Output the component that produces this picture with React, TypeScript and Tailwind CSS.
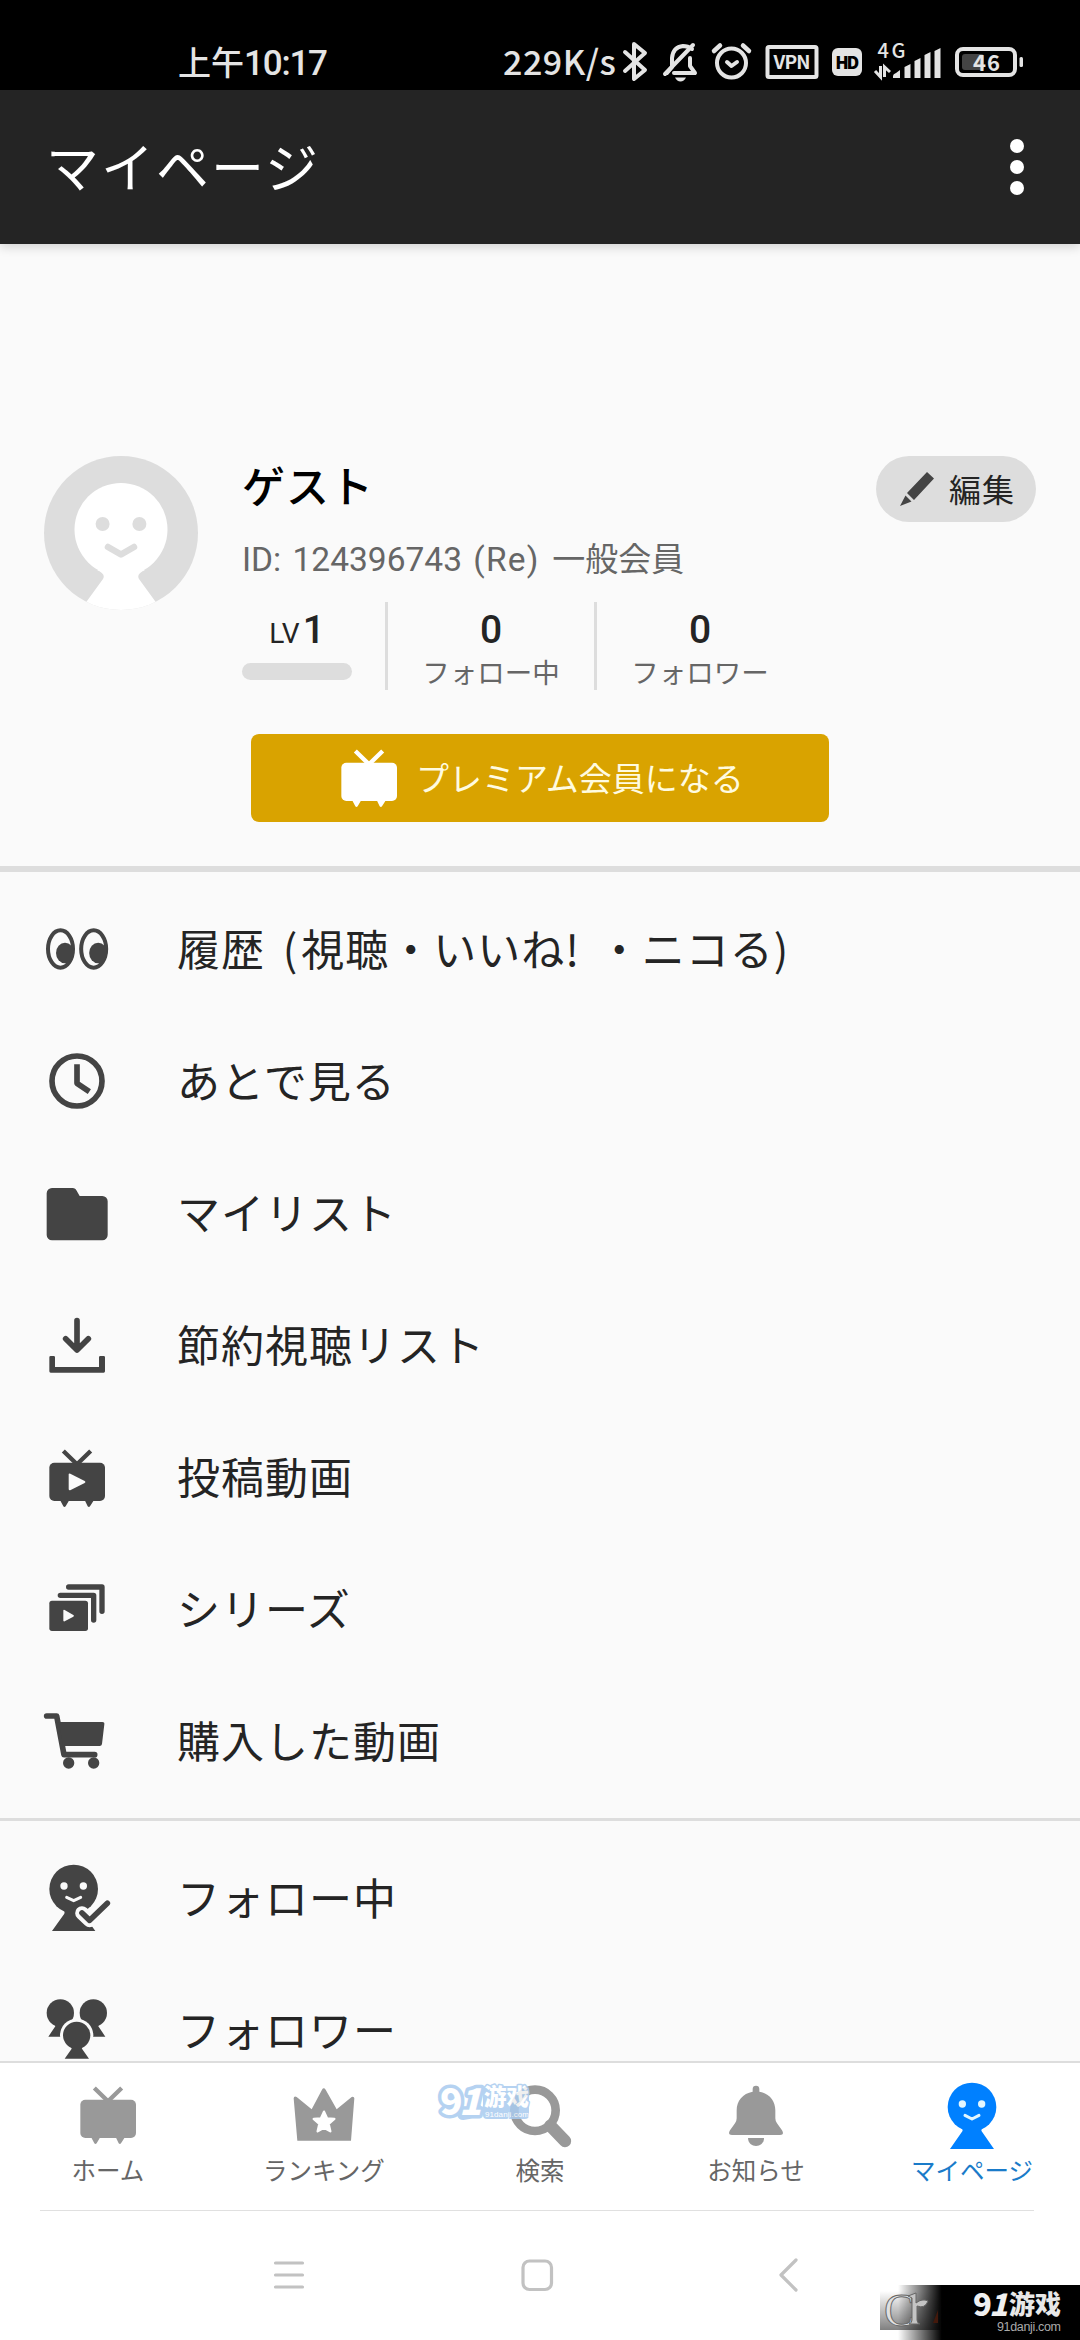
import type { ReactNode } from "react";

const INK = "#444444";
const PAPER = "#fafafa";

function Icon({ children, className = "" }: { children: ReactNode; className?: string }) {
  return (
    <svg viewBox="0 0 198 198" className={`h-[66px] w-[66px] shrink-0 overflow-visible ${className}`}>
      {children}
    </svg>
  );
}

const line = (color: string, width: number) => ({
  fill: "none",
  stroke: color,
  strokeWidth: width,
  strokeLinecap: "round" as const,
  strokeLinejoin: "round" as const,
});

function Eyes() {
  return (
    <Icon>
      {[49.5, 149].map((x) => (
        <g key={x}>
          <ellipse cx={x} cy="99" rx="37.5" ry="56" fill="none" stroke={INK} strokeWidth="12" />
          <ellipse cx={x + 13.5} cy="111" rx="27" ry="31" fill={INK} />
        </g>
      ))}
    </Icon>
  );
}

function Clock() {
  return (
    <Icon>
      <circle cx="99" cy="99" r="75" fill="none" stroke={INK} strokeWidth="17" />
      <path d="M99 49v57l37 25" fill="none" stroke={INK} strokeWidth="17" strokeLinejoin="round" />
    </Icon>
  );
}

function Folder() {
  return (
    <Icon>
      <path
        fill={INK}
        d="M24 24h62c6 0 9 3 12 8l9 16h68a16 16 0 0 1 16 16v101a16 16 0 0 1-16 16H24a16 16 0 0 1-16-16V40a16 16 0 0 1 16-16z"
      />
    </Icon>
  );
}

function Download() {
  return (
    <Icon>
      <path d="M99 26v86M65 80l34 34 34-34" {...line(INK, 17)} />
      <path d="M16 136q0-4 4-4h9q4 0 4 4v29h132v-29q0-4 4-4h10q4 0 4 4v42q0 4-4 4H20q-4 0-4-4z" fill={INK} />
    </Icon>
  );
}

function Tv({ color, play = false, className = "" }: { color: string; play?: boolean; className?: string }) {
  return (
    <Icon className={className}>
      <path d="M58 21l41 40 41-40" fill="none" stroke={color} strokeWidth="13" />
      <path d="M48 168h28l-11 19q-4 4-7 0zM122 168h28l-12 19q-3 4-7 0z" fill={color} />
      <rect x="16" y="56" width="167" height="115" rx="15" fill={color} />
      {play && <path d="M74 90q1-3 5-1l43 22q5 3 0 6l-42 21q-5 2-6-2z" fill={PAPER} />}
    </Icon>
  );
}

function Series() {
  return (
    <Icon>
      <path d="M49 58h100v74M74 33h100v73" {...line(INK, 16)} />
      <rect x="16" y="74" width="116" height="91" rx="8" fill={INK} />
      <path d="M58 103q1-3 4-1l26 15q4 2 0 5l-26 14q-3 1-4-2z" fill={PAPER} />
    </Icon>
  );
}

function Cart() {
  return (
    <Icon>
      <path d="M8 24h30l22 116h92" {...line(INK, 17)} />
      <path d="M44 42h131q7 0 6 7l-7 59q-1 6-7 6H58z" fill={INK} />
      <circle cx="74" cy="165" r="17" fill={INK} />
      <circle cx="149" cy="165" r="17" fill={INK} />
    </Icon>
  );
}

function Following() {
  return (
    <Icon>
      <circle cx="89" cy="72" r="73" fill={INK} />
      <path d="M50 130q15 6 11 16L24 198h130l-37-52q-4-10 11-16z" fill={INK} />
      <circle cx="60" cy="63" r="11" fill={PAPER} />
      <circle cx="118" cy="63" r="11" fill={PAPER} />
      <path d="M68 97l21 10 21-10" {...line(PAPER, 9)} />
      <path d="M114 144l23 22 53-51" {...line(PAPER, 41)} />
      <path d="M114 144l23 22 53-51" {...line(INK, 17)} />
    </Icon>
  );
}

function Followers() {
  return (
    <Icon>
      <circle cx="49" cy="48" r="41" fill={INK} />
      <circle cx="148" cy="48" r="41" fill={INK} />
      <path d="M27 80q10 4 6 9l-20 30h48V80zM169 80q-9 4-5 9l20 30h-48V80z" fill={INK} />
      <circle cx="98" cy="115" r="50" fill={PAPER} />
      <circle cx="98" cy="115" r="41" fill={INK} />
      <path d="M75 145q11 6 7 12l-20 28h73l-20-28q-5-6 7-12z" fill={INK} />
    </Icon>
  );
}

function Crown() {
  return (
    <Icon>
      <path
        fill="#999"
        d="M93 26q5-8 11 0l33 59 45-37q7-3 8 4l-10 127H19L8 52q1-8 9-4l45 37z"
      />
      <path
        d="M99 92l9 20 22 2-17 15 5 22-19-11-19 11 5-22-17-15 22-2z"
        fill="#fff"
        stroke="#fff"
        strokeWidth="7"
        strokeLinejoin="round"
      />
    </Icon>
  );
}

function Search() {
  return (
    <Icon>
      <circle cx="84" cy="88" r="62" fill="none" stroke="#999" strokeWidth="26" />
      <path d="M130 134l44 46" {...line("#999", 37)} />
    </Icon>
  );
}

function Bell() {
  return (
    <Icon>
      <path
        fill="#999"
        d="M89 32v-8q0-10 10-10t10 10v8c30 5 48 28 48 56v24q0 8 5 15l15 21q8 14-6 14H27q-14 0-6-14l15-21q5-7 5-15V88c0-28 18-51 48-56z"
      />
      <path d="M75 171h48c0 32-48 32-48 0z" fill="#999" />
    </Icon>
  );
}

function Person() {
  return (
    <Icon>
      <circle cx="99" cy="78" r="73" fill="#0080ff" />
      <path d="M58 136q17 7 12 15l-37 53h132l-37-53q-5-8 12-15z" fill="#0080ff" />
      <circle cx="70" cy="69" r="11" fill="#e2f6ff" />
      <circle cx="128" cy="69" r="11" fill="#e2f6ff" />
      <path d="M78 103l21 11 21-11" {...line("#e2f6ff", 9)} />
    </Icon>
  );
}

function Avatar() {
  return (
    <svg viewBox="44 456 154 154" className="h-[154px] w-[154px] shrink-0">
      <clipPath id="avatar">
        <circle cx="121" cy="533" r="77" />
      </clipPath>
      <g clipPath="url(#avatar)">
        <rect x="44" y="456" width="154" height="154" fill="#ddd" />
        <circle cx="121" cy="529.5" r="46.5" fill="#fff" />
        <path d="M97 570q9 4 6 9l-24 33h84l-24-33q-3-5 6-9z" fill="#fff" />
        <circle cx="102.6" cy="524" r="7" fill="#ddd" />
        <circle cx="139.4" cy="524" r="7" fill="#ddd" />
        <path d="M108 547l13 7.500 13-7.500" {...line("#ddd", 6.5)} />
      </g>
    </svg>
  );
}

function StatusIcons() {
  const c = "#e4e4e4";
  return (
    <svg viewBox="620 38 406 46" className="h-[46px] w-[406px] shrink-0 overflow-visible">
      <path d="M625 52l20 18-11 9V44l11 9-20 18" {...line(c, 4)} />
      <path d="M667 73l5-6V58q1-11 11-12 5 0 9 3M690 58v8l5 7H674" {...line(c, 4)} />
      <path d="M665 74l28-29" {...line(c, 4)} />
      <path d="M675 77.500h11q-2 4-5.500 4t-5.500-4z" fill={c} />
      <circle cx="731.500" cy="63" r="14.500" fill="none" stroke={c} strokeWidth="4" />
      <path d="M727 62l4.500 4 5.500-4" {...line(c, 4)} />
      <path d="M714 51l6-5.500M749 51l-6-5.500" {...line(c, 4.5)} />
      <rect x="767.500" y="47" width="49" height="30" rx="1.500" fill="none" stroke={c} strokeWidth="4" />
      <text x="792" y="69" textAnchor="middle" fontSize="19" fontWeight="700" fill={c} textLength="37">
        VPN
      </text>
      <rect x="832" y="48" width="30" height="28" rx="6" fill={c} />
      <text x="847.200" y="68.500" textAnchor="middle" fontSize="17.500" fontWeight="900" fill="#000" textLength="24">
        HD
      </text>
      <text x="877.500" y="58" fontSize="20" fontWeight="500" fill={c} textLength="28">
        4G
      </text>
      <path d="M880.500 66v11l-5.500-6M884.500 77V67l5.500 5" fill="none" stroke={c} strokeWidth="3" />
      <path
        fill={c}
        d="M893 76q0-2 3-3l4-3v8h-7zM904.500 67l6-3v14h-6zM914.500 61l6-3v20h-6zM924.500 55l6-3v26h-6zM934.500 51l6-3v30h-6z"
      />
      <rect x="957" y="49" width="58" height="26" rx="6" fill="none" stroke={c} strokeWidth="4" />
      <rect x="962" y="54" width="22" height="16" rx="3" fill="#444" />
      <rect x="1019.500" y="57" width="3.500" height="10" rx="1.500" fill={c} />
      <text x="986.500" y="71" textAnchor="middle" fontSize="22" fontWeight="700" fill={c} textLength="27">
        46
      </text>
    </svg>
  );
}

const mainItems = [
  {
    id: "history",
    label: (
      <>
        履歴 <span className="tracking-[4px]">(</span>視聴・いいね! ・ニコる)
      </>
    ),
    icon: <Eyes />,
  },
  { id: "later", label: "あとで見る", icon: <Clock /> },
  { id: "mylist", label: "マイリスト", icon: <Folder /> },
  { id: "saved", label: "節約視聴リスト", icon: <Download /> },
  { id: "posted", label: "投稿動画", icon: <Tv color={INK} play /> },
  { id: "series", label: "シリーズ", icon: <Series /> },
  { id: "bought", label: "購入した動画", icon: <Cart /> },
];

const socialItems = [
  { id: "following", label: "フォロー中", icon: <Following /> },
  { id: "followers", label: "フォロワー", icon: <Followers /> },
];

function MenuRow({ label, icon }: { label: ReactNode; icon: ReactNode }) {
  return (
    <li className="flex h-[132px] shrink-0 items-center pl-11">
      {icon}
      <span className="mb-[5px] ml-[67px] text-[43px] leading-[60px] tracking-[1px] whitespace-pre text-[#242424] [word-spacing:7px]">
        {label}
      </span>
    </li>
  );
}

const tabs = [
  { label: "ホーム", icon: <Tv color="#999999" /> },
  { label: "ランキング", icon: <Crown /> },
  { label: "検索", icon: <Search /> },
  { label: "お知らせ", icon: <Bell /> },
  { label: "マイページ", icon: <Person />, active: true },
];

function Stat({ value, label }: { value: string; label: string }) {
  return (
    <div className="flex w-[209px] flex-col items-center border-l-[3px] border-[#ddd]">
      <span className="mt-[8px] font-[Roboto] text-[39px] leading-[40px] font-medium">{value}</span>
      <span className="mt-[4px] text-[27.5px] leading-[34px] text-[#666]">{label}</span>
    </div>
  );
}

export default function App() {
  return (
    <div className="relative flex h-[2340px] w-[1080px] flex-col overflow-hidden bg-white font-['Noto_Sans_CJK_JP',sans-serif] text-[#242424]">
      <div className="flex h-[90px] shrink-0 items-start bg-black text-[34px] leading-[46px] font-medium text-[#e4e4e4]">
        <span className="mt-[38px] ml-[178px] w-[325px] text-[33px] whitespace-nowrap">
          上午<span className="font-[Roboto] text-[35px] tracking-[-1.2px]">10:17</span>
        </span>
        <span className="mt-[38px] w-[117px] tracking-[0.5px] whitespace-nowrap">229K/s</span>
        <div className="mt-[38px]">
          <StatusIcons />
        </div>
      </div>

      <header className="relative z-10 flex h-[154px] shrink-0 items-center justify-between bg-[#242424] pr-[56px] pl-[46px] text-white shadow-[0_3px_10px_rgba(0,0,0,0.16)]">
        <h1 className="mb-[4px] text-[53px] leading-[70px] tracking-[2px]">マイページ</h1>
        <div className="flex flex-col gap-[6.500px]">
          <i className="size-[14.500px] rounded-full bg-white" />
          <i className="size-[14.500px] rounded-full bg-white" />
          <i className="size-[14.500px] rounded-full bg-white" />
        </div>
      </header>

      <main className="flex min-h-0 flex-1 flex-col overflow-hidden bg-[#fafafa]">
        <section className="flex h-[622px] shrink-0 flex-col pt-[212px]">
          <div className="flex h-[234px] pr-11 pl-11">
            <Avatar />
            <div className="ml-[44px] flex-1">
              <h2 className="mt-[3px] text-[43px] leading-[50px] font-medium tracking-[1px] text-black">ゲスト</h2>
              <p className="mt-[24px] h-[48px] text-[33px] leading-[48px] whitespace-nowrap text-[#666]">
                <span className="font-[Roboto] text-[33.500px] [word-spacing:3px]">
                  ID: 124396743 <span className="tracking-[1.2px]">(Re) </span>
                </span>
                一般会員
              </p>
              <div className="mt-[21px] flex h-[88px]">
                <div className="mr-[33px] flex w-[110px] flex-col items-center">
                  <p className="mt-[8px] h-[40px] font-[Roboto] leading-[40px]">
                    <span className="mr-[3px] text-[28px]">LV</span>
                    <span className="text-[39px] font-medium">1</span>
                  </p>
                  <div className="mt-[13px] h-[17px] w-[110px] rounded-full bg-[#ddd]" />
                </div>
                <Stat value="0" label="フォロー中" />
                <Stat value="0" label="フォロワー" />
              </div>
            </div>
            <button className="-ml-[160px] flex h-[66px] w-[160px] items-center rounded-full bg-[#ddd] pl-[24px]">
              <svg viewBox="0 0 34 34" className="size-[34px]">
                <path d="M27 0l7 6.500-20 21.500-7-7zM5.500 23.500l6 6L0 34z" fill={INK} />
              </svg>
              <span className="mb-[2px] ml-[15px] text-[32px] leading-[44px] tracking-[1px]">編集</span>
            </button>
          </div>
          <button className="mx-auto mt-[44px] flex h-[88px] w-[578px] items-center rounded-lg bg-[#d9a300] pl-[85px] text-white">
            <Tv color="#ffffff" className="-mt-[2px]" />
            <span className="mb-[2px] ml-[14px] text-[33px] leading-[44px] text-[#fffbe0]">プレミアム会員になる</span>
          </button>
        </section>

        <ul className="flex shrink-0 flex-col border-t-[6px] border-[#ddd] py-[11px]">
          {mainItems.map((item) => (
            <MenuRow key={item.id} label={item.label} icon={item.icon} />
          ))}
        </ul>
        <ul className="flex shrink-0 flex-col border-t-[3px] border-[#ddd] pt-[11px]">
          {socialItems.map((item) => (
            <MenuRow key={item.id} label={item.label} icon={item.icon} />
          ))}
        </ul>
      </main>

      <nav className="grid h-[149px] shrink-0 grid-cols-5 border-t-2 border-[#ddd] bg-white">
        {tabs.map((tab) => (
          <div key={tab.label} className="flex flex-col items-center pt-[18px]">
            {tab.icon}
            <span
              className={
                tab.active
                  ? "mt-[6px] text-[24.500px] leading-[34px] text-[#1a7bc9]"
                  : "mt-[6px] text-[24.500px] leading-[34px] text-[#666]"
              }
            >
              {tab.label}
            </span>
          </div>
        ))}
      </nav>

      <footer className="mx-10 mr-[46px] flex h-[130px] shrink-0 items-start border-t border-[#e0e0e0] bg-white pt-[44px]">
        <svg viewBox="0 0 40 40" className="ml-[229px] size-10 shrink-0">
          <path d="M6.500 8h27M6.500 20h27M6.500 32h27" {...line("#c2c2c2", 3.2)} />
        </svg>
        <svg viewBox="0 0 40 40" className="ml-[208px] size-10 shrink-0">
          <rect x="6" y="6" width="28.500" height="28.500" rx="6.500" fill="none" stroke="#c2c2c2" strokeWidth="3.200" />
        </svg>
        <svg viewBox="0 0 40 40" className="ml-[211px] size-10 shrink-0">
          <path d="M28 5L13 20l15 15" {...line("#c2c2c2", 3.2)} />
        </svg>
      </footer>

      <svg viewBox="437 2082 96 38" className="absolute top-[2082px] left-[437px] h-[38px] w-[96px] overflow-visible">
        <g
          fill="#fff"
          stroke="#a9cbef"
          strokeWidth="7"
          strokeLinejoin="round"
          paintOrder="stroke"
          fontFamily="'Noto Sans CJK SC'"
          fontWeight="900"
          opacity="0.85"
        >
          <rect x="483" y="2086" width="46" height="33" fill="#a9cbef" stroke="none" rx="4" />
          <path d="M463 2114q10-1 13-5" fill="none" stroke="#a9cbef" strokeWidth="12" strokeLinecap="round" />
          <text x="440" y="2115" fontSize="37">
            9
          </text>
          <text x="459" y="2115" fontSize="37" fontStyle="italic">
            1
          </text>
          <text x="484" y="2105" fontSize="22.500" strokeWidth="3">
            游戏
          </text>
          <text x="485" y="2117" fontSize="8" fontFamily="'Liberation Sans'" fontWeight="400" strokeWidth="0" textLength="44">
            91danji.com
          </text>
        </g>
      </svg>

      <div className="absolute right-0 bottom-0 h-[55px] w-[200px]">
        <svg viewBox="880 2285 200 55" className="h-[55px] w-[200px] overflow-visible">
          <defs>
            <linearGradient id="fade">
              <stop offset="0" stopColor="#000" stopOpacity="0" />
              <stop offset="0.240" stopColor="#000" />
            </linearGradient>
            <linearGradient id="plate" x1="0" y1="0" x2="0" y2="1">
              <stop offset="0" stopColor="#fff" />
              <stop offset="1" stopColor="#808080" />
            </linearGradient>
          </defs>
          <rect x="880" y="2291" width="60" height="39" fill="url(#plate)" />
          <rect x="898" y="2285" width="182" height="55" fill="url(#fade)" />
          <text x="884" y="2326" fontSize="46" fontFamily="'Liberation Serif'" fill="#e0e0e0" stroke="#666" strokeWidth="1">
            C
          </text>
          <path
            d="M908 2296l8-3v10q6-5 12-2-3 8-11 5v14q0 3 3 4h-11q3-1 3-4v-22z"
            fill="#c4c4c4"
            stroke="#666"
            strokeWidth="1"
          />
          <path d="M933 2323l5-13v13z" fill="#43190c" />
          <text x="973" y="2316" fontSize="31" fontWeight="900" fill="#f0f0f0">
            9
          </text>
          <text x="989" y="2316" fontSize="31" fontWeight="900" fill="#f0f0f0" fontStyle="italic">
            1
          </text>
          <text x="1009" y="2314" fontSize="26" fontWeight="900" fill="#e8e8e8" fontFamily="'Noto Sans CJK SC'">
            游戏
          </text>
          <text x="997" y="2331" fontSize="12.500" fill="#aaa" fontFamily="'Liberation Sans'" textLength="64">
            91danji.com
          </text>
        </svg>
      </div>
    </div>
  );
}
